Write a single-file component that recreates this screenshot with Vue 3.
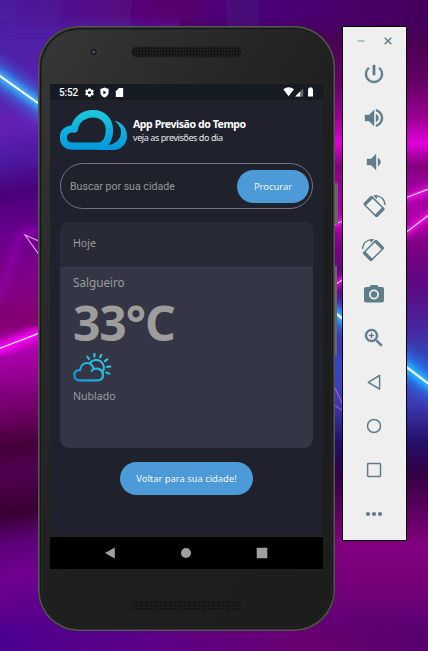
<script setup>
const tools = ['power', 'up', 'down', 'left', 'right', 'camera', 'zoom', 'back', 'home', 'recent', 'more']
const paths = {
  power: 'M13.2 3h-2.4v10h2.4V3zm4.63 2.17l-1.42 1.42C17.99 7.86 19 9.81 19 12c0 3.87-3.13 7-7 7s-7-3.13-7-7c0-2.19 1.01-4.14 2.58-5.42L6.17 5.17C4.23 6.82 3 9.26 3 12c0 4.97 4.03 9 9 9s9-4.03 9-9c0-2.74-1.23-5.18-3.17-6.83z',
  up: 'M3 9v6h4l5 5V4L7 9H3zm13.5 3c0-1.77-1.02-3.29-2.5-4.03v8.05c1.48-.73 2.5-2.25 2.5-4.02zM14 3.23v2.06c2.89.86 5 3.54 5 6.71s-2.11 5.85-5 6.71v2.06c4.01-.91 7-4.49 7-8.77s-2.99-7.86-7-8.77z',
  down: 'M18.5 12c0-1.77-1.02-3.29-2.5-4.03v8.05c1.48-.73 2.5-2.25 2.5-4.02zM5 9v6h4l5 5V4L9 9H5z',
  camera: 'M9 3L7.17 5H4c-1.1 0-2 .9-2 2v11.500c0 1.1.9 2 2 2h16c1.1 0 2-.9 2-2V7c0-1.1-.9-2-2-2h-3.170L15 3H9zM12 7.500a5 5 0 1 1 0 10a5 5 0 1 1 0-10zM12 9.300a3.200 3.200 0 1 0 0 6.400a3.200 3.200 0 1 0 0-6.400z',
  zoom: 'M15.5 14h-.79l-.28-.27C15.41 12.59 16 11.11 16 9.5 16 5.91 13.09 3 9.5 3S3 5.91 3 9.5 5.91 16 9.5 16c1.61 0 3.09-.59 4.23-1.57l.27.28v.79l5 4.99L20.49 19l-4.99-5zm-6 0C7.01 14 5 11.99 5 9.5S7.01 5 9.5 5 14 7.01 14 9.5 11.99 14 9.5 14zM12 10h-2v2H9v-2H7V9h2V7h1v2h2v1z'
}
</script>

<template>
  <main class="desktop">
    <svg class="wallpaper" viewBox="0 0 428 651" width="428" height="651">
      <defs>
        <linearGradient id="lft" x1="0" y1="0" x2="0" y2="1">
          <stop offset="0" stop-color="#4a22a8" /><stop offset=".1" stop-color="#5020a8" /><stop offset=".2" stop-color="#6420b4" />
          <stop offset=".25" stop-color="#4c18a0" /><stop offset=".3" stop-color="#4b0078" /><stop offset=".36" stop-color="#6a0090" />
          <stop offset=".43" stop-color="#800085" /><stop offset=".49" stop-color="#850070" /><stop offset=".53" stop-color="#b000b0" />
          <stop offset=".58" stop-color="#8c0088" /><stop offset=".64" stop-color="#600055" /><stop offset=".67" stop-color="#440038" />
          <stop offset=".71" stop-color="#500050" /><stop offset=".77" stop-color="#380033" /><stop offset=".81" stop-color="#5a0075" />
          <stop offset=".86" stop-color="#700090" /><stop offset=".94" stop-color="#55008c" /><stop offset="1" stop-color="#480092" />
        </linearGradient>
        <linearGradient id="rgt" x1="0" y1="0" x2="0" y2="1">
          <stop offset="0" stop-color="#3b0068" /><stop offset=".06" stop-color="#4a0052" /><stop offset=".12" stop-color="#600063" />
          <stop offset=".18" stop-color="#98008f" /><stop offset=".22" stop-color="#df00d8" /><stop offset=".255" stop-color="#85007c" />
          <stop offset=".29" stop-color="#a000a0" /><stop offset=".34" stop-color="#b000a8" /><stop offset=".38" stop-color="#7a0080" />
          <stop offset=".44" stop-color="#5d0a83" /><stop offset=".5" stop-color="#48249a" /><stop offset=".56" stop-color="#344ac0" />
          <stop offset=".62" stop-color="#3d3ab0" /><stop offset=".68" stop-color="#240f68" /><stop offset=".73" stop-color="#330044" />
          <stop offset=".78" stop-color="#59005e" /><stop offset=".84" stop-color="#820080" /><stop offset=".91" stop-color="#720078" />
          <stop offset="1" stop-color="#500074" />
        </linearGradient>
        <linearGradient id="top"><stop offset="0" stop-color="#4a22a8" /><stop offset=".2" stop-color="#501090" /><stop offset=".42" stop-color="#5a006c" /><stop offset=".55" stop-color="#48087c" /><stop offset=".78" stop-color="#480068" /><stop offset="1" stop-color="#430058" /></linearGradient>
        <linearGradient id="bot"><stop offset="0" stop-color="#480092" /><stop offset=".35" stop-color="#5b0088" /><stop offset=".7" stop-color="#6a0070" /><stop offset="1" stop-color="#52006f" /></linearGradient>
        <filter id="b2"><feGaussianBlur stdDeviation="3" /></filter>
        <filter id="b8" x="-50%" y="-50%" width="200%" height="200%"><feGaussianBlur stdDeviation="8" /></filter>
      </defs>
      <rect y="-8" width="180" height="680" fill="url(#lft)" transform="skewY(-8)" />
      <rect x="180" width="248" height="651" fill="url(#rgt)" />
      <rect x="-30" y="-30" width="488" height="58" fill="url(#top)" filter="url(#b8)" />
      <rect x="-30" y="624" width="488" height="50" fill="url(#bot)" filter="url(#b8)" />
      <g fill="none">
        <path d="M-15 66L52 113" stroke="#258df0" stroke-width="18" filter="url(#b8)" />
        <path d="M-10 69L52 113" stroke="#4cbcff" stroke-width="7" filter="url(#b2)" />
        <path d="M-10 69L52 113" stroke="#fff" stroke-width="2" />
        <path d="M22 232L-2 300M22 231H45" stroke="#a800cc" stroke-width="5" opacity=".55" filter="url(#b2)" />
        <path d="M50 270L25 235L50 246" stroke="#ef96f2" stroke-width="1.200" />
        <path d="M-10 352L50 329" stroke="#f000f0" stroke-width="13" filter="url(#b2)" />
        <path d="M-2 349L50 329" stroke="#ffd5ff" stroke-width="1.500" />
        <path d="M395 203L438 186M395 241L438 208M330 226L348 219M330 288L348 276" stroke="#e810e0" stroke-width="7" filter="url(#b2)" />
        <path d="M400 200L434 187M400 237L434 211M330 226L348 219M330 288L348 276" stroke="#ffc0fb" stroke-width="1.300" />
        <path d="M330 309L438 391" stroke="#228aff" stroke-width="18" filter="url(#b8)" />
        <path d="M330 309L438 391" stroke="#25bfff" stroke-width="8" filter="url(#b2)" />
        <path d="M330 309L438 391" stroke="#effcff" stroke-width="2.200" />
        <path d="M334 386L343 405M334 405L343 411" stroke="#d058df" stroke-width="1" />
      </g>
    </svg>

    <section class="phone">
      <i class="key power-key"></i><i class="key volume-key"></i>
      <div class="bezel top-bezel"><i class="lens"></i><i class="grille"></i></div>
      <div class="screen">
        <header class="status">
          <span class="clock">5:52</span>
          <svg class="gear" viewBox="0 0 24 24" width="11" height="11"><path fill="#fff" fill-rule="evenodd" d="M19.400 13a7.500 7.500 0 0 0 0-2l2.200-1.700-2.100-3.600-2.600 1a8 8 0 0 0-1.700-1L14.800 3h-5.600l-.4 2.700a8 8 0 0 0-1.700 1l-2.600-1-2.100 3.600L4.600 11a7.500 7.500 0 0 0 0 2l-2.200 1.700 2.100 3.600 2.600-1a8 8 0 0 0 1.700 1l.4 2.700h5.600l.4-2.700a8 8 0 0 0 1.700-1l2.600 1 2.100-3.600zM12 15.500a3.500 3.500 0 1 1 0-7a3.500 3.500 0 1 1 0 7z" /></svg>
          <svg class="shield" viewBox="0 0 24 24" width="11" height="11"><path fill="#fff" fill-rule="evenodd" d="M12 1L3 4.500V11c0 6 4 10 9 12 5-2 9-6 9-12V4.500zM9.500 7.500L16 12l-6.500 4.500z" /></svg>
          <svg viewBox="0 0 24 24" width="11" height="11"><path fill="#fff" d="M20 2H11L4 9v13h16z" /></svg>
          <svg class="net" viewBox="0 0 32 12" width="32" height="12">
            <path fill="#fff" d="M.3 3.300Q5.600-.9 11 3.300L5.600 10.300z" />
            <path fill="#666a70" d="M12.200 10.500L20.200 2.500v8z" /><path fill="#fff" d="M12.200 10.500L17.200 5.500v5z" />
            <path fill="#fff" d="M25 2.500h1V1.500h3v1h1v8h-5z" />
          </svg>
        </header>

        <div class="app">
          <div class="brand">
            <svg viewBox="0 0 205 120" width="68" height="40">
              <defs><linearGradient id="logo" gradientUnits="userSpaceOnUse" x1="100" y1="0" x2="100" y2="120"><stop offset="0" stop-color="#1fc9df" /><stop offset="1" stop-color="#0098dc" /></linearGradient></defs>
              <path d="M38 108.500C20 108.500 10 97 10 83C10 66 23 55 43 57C48 30 69 11 101 11C129 11 149 32 149 60C149 86 138 108.500 116 108.500Z" fill="none" stroke="url(#logo)" stroke-width="22" stroke-linejoin="round" />
              <path d="M164 32C188 36 202 57 202 78C202 103 185 120 160 120H112L138 106C165 105 184 90 184 66C184 52 176 42 164 32Z" fill="url(#logo)" />
            </svg>
            <div class="names"><h1>App Previsão do Tempo</h1><p>veja as previsões do dia</p></div>
          </div>

          <div class="search"><span>Buscar por sua cidade</span><button>Procurar</button></div>

          <article class="card">
            <div class="day">Hoje</div>
            <div class="info">
              <div class="city">Salgueiro</div>
              <div class="temp">33°C</div>
              <svg class="weather" viewBox="68 250 116 87" width="38.700" height="29">
                <defs><linearGradient id="sky" gradientUnits="userSpaceOnUse" x1="80" y1="335" x2="160" y2="255"><stop offset="0" stop-color="#109bdc" /><stop offset="1" stop-color="#35c7df" /></linearGradient></defs>
                <g fill="none" stroke="url(#sky)" stroke-width="6.500" stroke-linecap="round" stroke-linejoin="round">
                  <path d="M111 261L116 268M132.500 253L132 261M152.500 256L149.500 263M171 269L164 274M180 290.500L170 291.500M177 312L168 308.500" />
                  <path d="M119 280A23 23 0 1 1 156 308" />
                  <path d="M87 332C77 332 72 325 72 317C72 307 79 301 89 301C92 286 100 280 110 280C120 280 127 287 130 298C146 294 158 302 158 315C158 326 151 332 141 332Z" />
                  <path d="M124 304Q126 299 132 298" />
                </g>
              </svg>
              <div class="condition">Nublado</div>
            </div>
          </article>
          <button class="return">Voltar para sua cidade!</button>
        </div>
        <nav class="nav">
          <svg viewBox="0 0 12 12" width="12" height="12"><path d="M1 6L10.800.5v11z" /></svg>
          <svg viewBox="0 0 12 12" width="12" height="12"><circle cx="6" cy="6" r="5" /></svg>
          <svg viewBox="0 0 12 12" width="12" height="12"><rect x=".7" y=".7" width="10.600" height="10.600" rx=".5" /></svg>
        </nav>
      </div>
      <div class="bezel bottom-bezel"><i class="grille"></i></div>
    </section>

    <aside class="panel">
      <div class="window-bar">
        <svg viewBox="0 0 10 10" width="10" height="10"><path d="M1.500 5H8.500" stroke="#9cb0b8" stroke-width="1.500" /></svg>
        <svg viewBox="0 0 10 10" width="10" height="10"><path d="M1.700 1.700L8.300 8.300M8.300 1.700L1.700 8.300" stroke="#607d8b" stroke-width="1.400" /></svg>
      </div>
      <div v-for="t in tools" :key="t" class="tool">
        <svg viewBox="0 0 24 24" width="24" height="24">
          <path v-if="paths[t]" :d="paths[t]" fill="#607d8b" fill-rule="evenodd" :stroke="t === 'camera' ? 'none' : '#607d8b'" stroke-width=".35" />
          <g v-else-if="t === 'left' || t === 'right'" :transform="t === 'right' ? 'translate(23.500 0) scale(-1 1)' : ''">
            <g transform="rotate(-45 12 12.500)">
              <rect x="6.600" y="3.600" width="10.800" height="18" rx="1" fill="none" stroke="#607d8b" stroke-width="1.500" />
              <path d="M6 4.500Q6 3 7.500 3h9Q18 3 18 4.500V6H6zM6 19h12v1.500q0 1.500-1.500 1.500h-9Q6 22 6 20.500z" fill="#607d8b" />
            </g>
            <path d="M12 1.700C18.500 1 23 5.500 23 11" fill="none" stroke="#607d8b" stroke-width="1.300" /><path d="M11.500 1.200L16 1.500 14.500 5z" fill="#607d8b" />
          </g>
          <g v-else fill="none" stroke="#607d8b" stroke-width="1.500">
            <path v-if="t === 'back'" d="M6.300 12.300L17.600 5.500v13.500z" stroke-linejoin="round" />
            <circle v-if="t === 'home'" cx="12" cy="12" r="6.500" />
            <rect v-if="t === 'recent'" x="5.600" y="5.600" width="12.900" height="12.900" rx=".7" />
            <g v-if="t === 'more'" fill="#607d8b" stroke="none"><circle cx="6" cy="12" r="2.100" /><circle cx="12" cy="12" r="2.100" /><circle cx="18" cy="12" r="2.100" /></g>
          </g>
        </svg>
      </div>
    </aside>
  </main>
</template>

<style>
html, body { margin: 0; overflow: hidden; }
</style>

<style scoped>
.desktop { position: relative; width: 428px; height: 651px; overflow: hidden; font-family: "Noto Sans", sans-serif; }
.desktop * { box-sizing: border-box; }
svg { display: block; flex: none; }
.wallpaper { position: absolute; inset: 0; }
.phone { position: absolute; left: 38px; top: 26px; width: 297px; height: 605px; padding: 0 12px; border-radius: 41px; background: linear-gradient(120deg, #383838, #292929 28%, #1e1e1e 55%, #1d1d1d); box-shadow: inset 0 0 0 1px #555754, inset 0 0 0 2px #3c3d3b, inset 0 0 1px 3px #141414, inset 0 0 0 4px #2a2a2a; display: flex; flex-direction: column; }
.key { position: absolute; left: 297px; width: 2px; background: #666; }
.power-key { top: 157px; height: 41px; width: 3px; }
.volume-key { top: 240px; height: 89px; }
.bezel { display: flex; }
.top-bezel { height: 58px; padding: 20px 0 0 37px; }
.lens { width: 12px; height: 12px; border-radius: 50%; background: radial-gradient(circle at 55% 50%, #67576d 0 8%, #1d1a22 20% 28%, #353535 46%); }
.grille { width: 109px; height: 10px; border-radius: 5px; background: radial-gradient(circle, #050505 0 .7px, transparent 1px) 0 0 / 3px 3px, #1c1c1c; box-shadow: 0 0 1px #111; }
.top-bezel .grille { margin: 1px 0 0 33px; }
.bottom-bezel { height: 62px; padding: 32px 0 0 82px; }
.screen { width: 273px; height: 485px; background: #1f212d; display: flex; flex-direction: column; }
.status { height: 16px; background: #161a22; display: flex; align-items: center; padding: 0 8px 0 9px; }
.clock { color: #fff; font: 500 10px/16px Roboto, sans-serif; width: 25px; padding-top: 1px; letter-spacing: -.2px; }
.gear, .shield { margin-right: 4px; }
.net { margin-left: auto; }
.app { height: 437px; padding: 10px 10px 0; display: flex; flex-direction: column; }
.brand { display: flex; gap: 5px; height: 40px; }
.names { color: #fff; padding-top: 6px; white-space: nowrap; }
h1 { margin: 0; font-size: 10.6px; line-height: 16px; font-weight: 700; letter-spacing: -.46px; }
p { margin: 0; font-size: 9px; line-height: 11px; letter-spacing: -.42px; color: #e8e8ea; }
.search { margin-top: 13px; height: 46px; border: 1px solid #73747a; border-radius: 23px; padding: 0 3px 0 9px; display: flex; align-items: center; justify-content: space-between; color: #97989c; font: 10.6px Roboto, sans-serif; }
button { border: 0; background: #4d9ad8; color: #f0f6fc; font: 9.4px "Noto Sans", sans-serif; padding: 0; height: 33px; border-radius: 17px; white-space: nowrap; }
.search button { width: 72px; }
.card { margin-top: 13px; height: 226px; border-radius: 9px; overflow: hidden; background: #343645; color: #9b9b9f; font-size: 10.6px; }
.day { height: 45px; background: #282a36; padding: 0 13px; line-height: 42px; }
.info { padding: 6px 13px; }
.city { font-size: 11.7px; line-height: 18px; }
.temp { font-size: 48px; line-height: 64px; font-weight: 700; letter-spacing: -1.1px; color: #9d9d9d; }
.weather { margin-top: -2px; }
.condition { line-height: 16px; margin-top: 6px; }
.return { margin-top: 14px; align-self: center; width: 133px; }
.nav { height: 32px; background: #000; fill: #a0a0a0; display: flex; align-items: center; padding-left: 54px; gap: 64px; }
.panel { position: absolute; left: 342px; top: 26px; width: 65px; height: 515px; border: 1px solid #000; background: #efefef; display: flex; flex-direction: column; }
.window-bar { height: 25px; padding: 9px 0 0 13px; display: flex; gap: 17px; }
.tool { height: 44px; display: flex; align-items: center; justify-content: center; padding-right: 1px; }
</style>
